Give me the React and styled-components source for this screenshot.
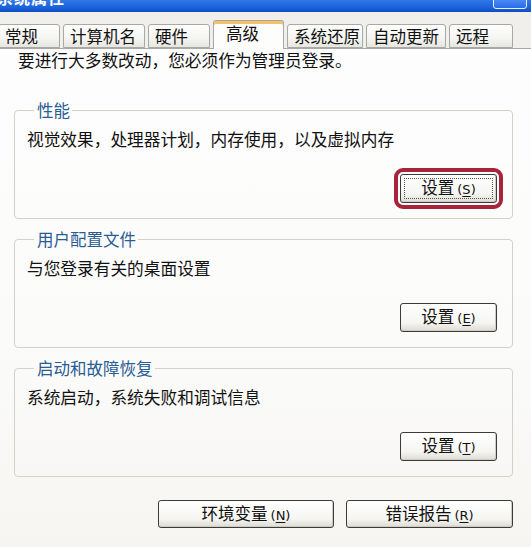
import React from 'react'
import styled, { createGlobalStyle } from 'styled-components'

const GlobalStyle = createGlobalStyle`
  html, body {
    margin: 0;
    padding: 0;
    background: #f1f0ec;
  }
  body {
    font-family: "Noto Sans CJK SC", "Noto Sans", sans-serif;
    color: #111;
  }
`

const Dialog = styled.div`
  width: 531px;
  height: 547px;
  overflow: hidden;
  display: flex;
  flex-direction: column;
  background: #f0efeb;
`

const TitleBar = styled.div`
  height: 12px;
  flex: none;
  display: flex;
  justify-content: space-between;
  overflow: hidden;
  background: linear-gradient(to bottom, #2f78e8 0%, #1a5fd9 70%, #0d4cc0 100%);
`

const TitleText = styled.span`
  margin-top: -13px;
  margin-left: -3px;
  font-size: 16px;
  line-height: 20px;
  font-weight: bold;
  color: #fff;
  letter-spacing: 1px;
`

const TitleButton = styled.span`
  width: 32px;
  height: 9px;
  margin-right: 4px;
  margin-top: -2px;
  border: 1px solid #e8f0ff;
  border-radius: 0 0 3px 3px;
  background: linear-gradient(to bottom, #4d8ef5, #2a6ce6);
`

const TabStrip = styled.div`
  flex: none;
  display: flex;
  align-items: flex-end;
  gap: 3px;
  height: 36px;
  margin-left: -2px;
  position: relative;
  z-index: 1;
`

const Tab = styled.div`
  box-sizing: border-box;
  width: ${p => p.w}px;
  height: ${p => (p.active ? 29 : 24)}px;
  margin-bottom: ${p => (p.active ? -1 : 0)}px;
  padding-left: ${p => (p.active ? 12 : 6)}px;
  font-size: 16.5px;
  line-height: ${p => (p.active ? 25 : 23)}px;
  color: #111;
  border: 1px solid #a7a9a4;
  border-bottom: ${p => (p.active ? 'none' : '1px solid #a7a9a4')};
  border-radius: 3px 3px 0 0;
  background: ${p =>
    p.active
      ? '#fdfdfb'
      : 'linear-gradient(to bottom, #fefefe 0%, #f4f4f1 60%, #e7e6e0 100%)'};
  box-shadow: ${p => (p.active ? 'inset 0 3px 0 #f3c26a' : 'none')};
  white-space: nowrap;
`

const Panel = styled.div`
  flex: 1;
  border-top: 1px solid #a7a9a4;
  background: linear-gradient(to bottom, #fdfdfd 0%, #fbfbfa 60%, #f6f5f1 100%);
  padding: 0 18px 0 14px;
  display: flex;
  flex-direction: column;
`

const Intro = styled.p`
  margin: 0 0 29px 4px;
  font-size: 16.7px;
  line-height: 22px;
`

const Group = styled.fieldset`
  box-sizing: border-box;
  margin: 0 0 10px 0;
  padding: 0 15px 0 12px;
  height: 119px;
  border: 1px solid #d3d2c6;
  border-radius: 4px;
  display: flex;
  flex-direction: column;
`

const Legend = styled.legend`
  margin-left: 7px;
  padding: 0 2px 0 3px;
  font-size: 16.5px;
  line-height: 20px;
  color: #2a5c94;
`

const Description = styled.div`
  margin-top: 8px;
  font-size: 16.7px;
  line-height: 22px;
`

const ButtonRow = styled.div`
  display: flex;
  justify-content: flex-end;
  gap: 12px;
  margin-top: ${p => p.top || 0}px;
`

const Button = styled.button`
  box-sizing: border-box;
  width: ${p => p.w}px;
  height: ${p => p.h || 29}px;
  padding: 0;
  font-family: inherit;
  font-size: 16.5px;
  line-height: 20px;
  color: #111;
  border: 1px solid #3b3b3b;
  border-radius: 3px;
  background: linear-gradient(to bottom, #ffffff 0%, #f5f5f1 70%, #dcdbd3 100%);
  box-shadow: inset -1px -1px 0 #cfcdc3;
  outline: ${p => (p.marked ? '4px solid #a8243a' : 'none')};
  outline-offset: 2px;
  position: relative;
  &::after {
    content: '';
    display: ${p => (p.marked ? 'block' : 'none')};
    position: absolute;
    left: 3px;
    right: 3px;
    top: 3px;
    bottom: 3px;
    border: 1px dotted #555;
  }
`

const Key = styled.span`
  font-family: "DejaVu Sans", sans-serif;
  font-size: 13px;
  margin-left: 3px;
  & u {
    text-underline-offset: 2px;
  }
`

const Label = ({ text, k }) => (
  <>
    {text}
    <Key>
      (<u>{k}</u>)
    </Key>
  </>
)

const tabs = [
  { name: '常规', w: 62 },
  { name: '计算机名', w: 82 },
  { name: '硬件', w: 62 },
  { name: '高级', w: 71, active: true },
  { name: '系统还原', w: 76 },
  { name: '自动更新', w: 80 },
  { name: '远程', w: 64 },
]

const groups = [
  { title: '性能', text: '视觉效果，处理器计划，内存使用，以及虚拟内存', key: 'S', marked: true },
  { title: '用户配置文件', text: '与您登录有关的桌面设置', key: 'E' },
  { title: '启动和故障恢复', text: '系统启动，系统失败和调试信息', key: 'T' },
]

export default function App() {
  return (
    <>
      <GlobalStyle />
      <Dialog>
        <TitleBar>
          <TitleText>系统属性</TitleText>
          <TitleButton />
        </TitleBar>
        <TabStrip>
          {tabs.map(t => (
            <Tab key={t.name} w={t.w} active={t.active}>
              {t.name}
            </Tab>
          ))}
        </TabStrip>
        <Panel>
          <Intro>要进行大多数改动，您必须作为管理员登录。</Intro>
          {groups.map(g => (
            <Group key={g.title}>
              <Legend>{g.title}</Legend>
              <Description>{g.text}</Description>
              <ButtonRow top={24}>
                <Button w={97} marked={g.marked}>
                  <Label text="设置" k={g.key} />
                </Button>
              </ButtonRow>
            </Group>
          ))}
          <ButtonRow top={13}>
            <Button w={176} h={28}>
              <Label text="环境变量" k="N" />
            </Button>
            <Button w={167} h={28}>
              <Label text="错误报告" k="R" />
            </Button>
          </ButtonRow>
        </Panel>
      </Dialog>
    </>
  )
}
